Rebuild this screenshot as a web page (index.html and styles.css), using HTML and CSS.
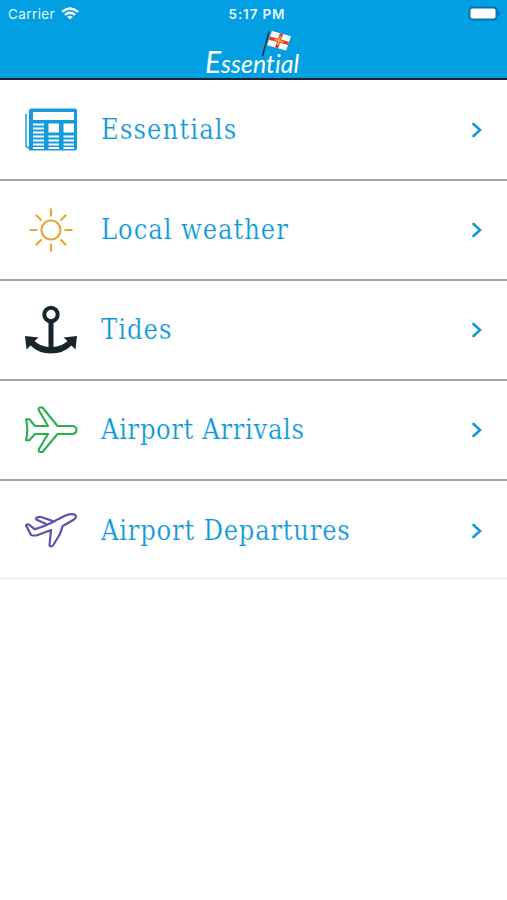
FILE: index.html
```html
<!DOCTYPE html>
<html lang="en">
<head>
<meta charset="utf-8">
<title>Essential</title>
<link rel="stylesheet" href="styles.css">
</head>
<body>
<header class="header">
  <div class="status">
    <div class="carrier"><span>Carrier</span>
      <svg width="18" height="13" viewBox="0 0 18 13" fill="none" stroke="#fff" stroke-width="2.400"><path d="M1 4.800Q9-2 17 4.800M4 7.900Q9 3.700 14 7.900"/><path d="M6.200 9.800Q9 7.600 11.800 9.800L9 12.600Z" fill="#fff" stroke="none"/></svg>
    </div>
    <div class="clock">5:17 PM</div>
    <svg class="battery" width="33" height="15" viewBox="0 0 33 15"><rect x="1.500" y="1.500" width="27" height="12" rx="3" fill="#fff" stroke="#0873b4" stroke-width="1.900"/><path d="M30 5v5q2-1 2-2.500t-2-2.500" fill="#0873b4"/></svg>
  </div>
  <svg class="logo" width="104" height="50" viewBox="0 0 104 50">
    <text x="3" y="45.500" textLength="94" lengthAdjust="spacingAndGlyphs" class="logo-text"><tspan class="logo-cap">E</tspan>ssential</text>
    <path d="M67 4.500L60.500 29" stroke="#17344a" stroke-width="1.500"/>
    <g transform="matrix(.95 .26 -.33 .95 70 4)">
      <path d="M0 0h20v15H0z" fill="#fff"/>
      <path d="M10 0v15M0 7.500h20" stroke="#e53b32" stroke-width="3.400"/>
      <path d="M10 3v9M5.500 7.500h9" stroke="#f4b73b" stroke-width="1.600"/>
    </g>
  </svg>
</header>
<main class="menu">
  <a class="row">
    <svg class="icon" width="54" height="54" viewBox="0 0 54 54" fill="none" stroke="#149bdb"><path d="M2 11v31q0 2.700 3 2.700" stroke-width="1.500"/><path fill="#149bdb" stroke="none" fill-rule="evenodd" d="M7.500 5.500h43.500q2 0 2 2v38q0 2-2 2h-46v-40q0-2 2.500-2zM9 9v8h41V9zM24.500 20.500v9H35v-9zM39.500 20.500v9H50v-9z"/><path stroke="#fff" stroke-width="2" d="M9 21.500h11M9 25.500h11M9 29.500h11M9 33.500h11M9 37.500h11M9 41.500h11M9 45h11M24.500 33.500H35M24.500 37.500H35M24.500 41.500H35M24.500 45H35M39.500 33.500H50M39.500 37.500H50M39.500 41.500H50M39.500 45H50"/></svg>
    <span class="label essentials">Essentials</span><svg class="chevron" width="12" height="18" viewBox="0 0 12 18"><path d="M2.500 3l6.500 6-6.500 6"/></svg>
  </a>
  <a class="row">
    <svg class="icon" width="54" height="54" viewBox="0 0 54 54" fill="none" stroke="#eba535" stroke-width="2.200"><circle cx="27" cy="27" r="9.500"/><path d="M27 5.500v8M27 40.500v8M5.500 27h8M40.500 27h8M11.800 11.800l5.700 5.700M36.500 36.500l5.700 5.700M42.200 11.800l-5.700 5.700M17.500 36.500l-5.700 5.700"/></svg>
    <span class="label weather">Local weather</span><svg class="chevron" width="12" height="18" viewBox="0 0 12 18"><path d="M2.500 3l6.500 6-6.500 6"/></svg>
  </a>
  <a class="row">
    <svg class="icon" width="54" height="54" viewBox="0 0 54 54"><circle cx="27" cy="11.500" r="6.700" fill="none" stroke="#18252a" stroke-width="4"/><path d="M24.500 18h5v26q9-1 14-6l-4-3.500 13.500-1.500-1.500 13.500-4-4q-8 8-20.500 8t-20.500-8l-4 4-1.500-13.500 13.500 1.500-4 3.500q5 5 14 6z" fill="#18252a"/></svg>
    <span class="label tides">Tides</span><svg class="chevron" width="12" height="18" viewBox="0 0 12 18"><path d="M2.500 3l6.500 6-6.500 6"/></svg>
  </a>
  <a class="row">
    <svg class="icon" width="54" height="54" viewBox="0 0 54 54" fill="none" stroke="#27b14c" stroke-width="2.100" stroke-linejoin="round"><path d="M2 16.300h3.300l5.700 6.700H24L15 7.500q-1-2.700 1-3h2.500L33.500 23h15q4 .6 4 4t-4 4h-15L18.500 49H16q-2-.5-1-3L24 31H11l-5.700 6.300H2q2.600-10.600 0-21z"/></svg>
    <span class="label arrivals">Airport Arrivals</span><svg class="chevron" width="12" height="18" viewBox="0 0 12 18"><path d="M2.500 3l6.500 6-6.500 6"/></svg>
  </a>
  <a class="row">
    <svg class="icon" width="54" height="54" viewBox="0 0 54 54" fill="none" stroke="#654fa8" stroke-width="2.200" stroke-linejoin="round"><path d="M31 16.800L41.500 11.500Q48 9.300 51 10.800q2.500 1.700-1 4.700L38.500 22.300 36 30l-7 11.500q-2.500 2-3.500-.5L27 26 12.500 31.500H8.500q-1.500-.3-2-1.500L2 21.200q.5-1.200 3-.7l5.500 4.700q8-1.700 21-8.400z"/><path d="M29.500 17.300L17 13q-3-.8-5 1.300 0 1.500 2.500 2.200l8.500 4"/></svg>
    <span class="label departures">Airport Departures</span><svg class="chevron" width="12" height="18" viewBox="0 0 12 18"><path d="M2.500 3l6.500 6-6.500 6"/></svg>
  </a>
</main>
</body>
</html>
```
FILE: styles.css
```css
* { box-sizing: border-box; }
body { margin: 0; background: #fff; font-family: Inter, "Liberation Sans", sans-serif; }
.header { height: 80px; background: #029fe3; border-bottom: 2px solid #16252d; display: flex; flex-direction: column; align-items: center; }
.status { width: 100%; height: 27px; padding: 0 6px 0 8px; display: grid; grid-template-columns: 1fr auto 1fr; align-items: center; color: #e8f7ff; }
.carrier { display: flex; align-items: center; gap: 6px; font-size: 13.5px; letter-spacing: .4px; }
.clock { margin-left: 5px; font-size: 13.5px; font-weight: 600; letter-spacing: .85px; }
.battery { justify-self: end; }
.logo { display: block; }
.logo-text { font: italic 400 25px Lato, sans-serif; font-variant-ligatures: none; fill: #fff; }
.logo-cap { font-size: 30px; }
.menu { padding-top: 1px; }
.row { height: 100px; padding: 0 24px; display: flex; align-items: center; border-bottom: 2px solid #a5a5a5; }
.row:last-child { height: 98px; padding-top: 2px; border-bottom: 1px solid #e8e8e8; }
.icon { flex: none; }
.label { margin-left: 23px; flex: 1; white-space: nowrap; color: #0c98da; font: 27px/40px "DejaVu Serif Condensed", "DejaVu Serif", serif; font-stretch: condensed; -webkit-text-stroke: .2px #fff; }
.essentials { letter-spacing: 1.15px; }
.weather { letter-spacing: .95px; }
.tides { letter-spacing: 1px; }
.arrivals { letter-spacing: .65px; }
.departures { letter-spacing: .78px; }
.chevron { flex: none; fill: none; stroke: #1599d8; stroke-width: 2.6; stroke-linecap: round; }
```
